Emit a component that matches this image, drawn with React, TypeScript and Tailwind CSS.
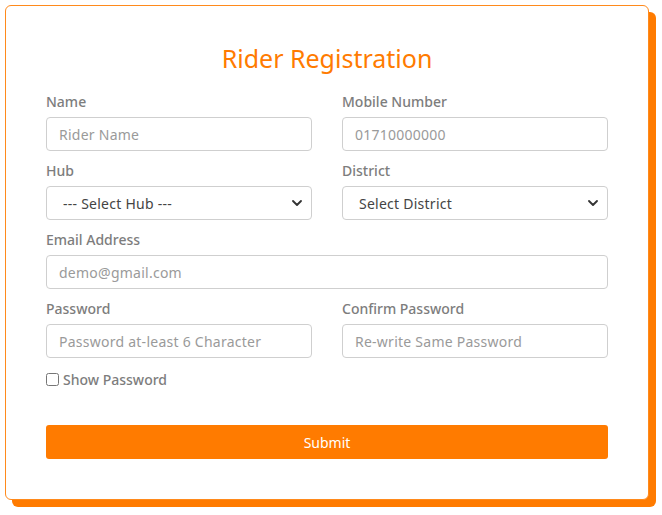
import { ChevronDown } from "lucide-react";

const font = { fontFamily: "'Noto Sans', 'Open Sans', sans-serif" };

function Field({ label, placeholder, full }: { label: string; placeholder: string; full?: boolean }) {
  return (
    <div className={full ? "col-span-2 flex flex-col" : "flex flex-col"}>
      <label className="h-5 text-[14px] leading-5 font-medium text-[#7d7d7d] mb-[5px]">{label}</label>
      <input
        className="h-[34px] w-full rounded-[4px] border border-[#cfcfcf] px-[12px] text-[14px] tracking-[0.25px] text-[#555] placeholder:text-[#9a9a9a] outline-none"
        placeholder={placeholder}
      />
    </div>
  );
}

function SelectField({ label, value }: { label: string; value: string }) {
  return (
    <div className="flex flex-col">
      <label className="h-5 text-[14px] leading-5 font-medium text-[#7d7d7d] mb-[5px]">{label}</label>
      <div className="relative">
        <select className="h-[34px] w-full appearance-none rounded-[4px] border border-[#cfcfcf] bg-white px-[16px] text-[14px] tracking-[0.25px] text-[#444] outline-none">
          <option>{value}</option>
        </select>
        <ChevronDown className="pointer-events-none absolute right-[7px] top-[9px] h-[16px] w-[16px] text-[#333]" strokeWidth={2.8} />
      </div>
    </div>
  );
}

export default function App() {
  return (
    <div className="bg-white min-h-[515px] p-[5px]" style={font}>
      <div className="w-[644px] h-[495px] rounded-[6px] border border-[#ff8a1c] bg-white shadow-[7px_7px_0_#ff7b00] px-[40px] pt-[36px]">
        <h1 className="text-center text-[25px] leading-8 text-[#ff7b00] mb-[18px]">Rider Registration</h1>
        <div className="grid grid-cols-2 gap-x-[30px] gap-y-[10px]">
          <Field label="Name" placeholder="Rider Name" />
          <Field label="Mobile Number" placeholder="01710000000" />
          <SelectField label="Hub" value="--- Select Hub ---" />
          <SelectField label="District" value="Select District" />
          <Field label="Email Address" placeholder="demo@gmail.com" full />
          <Field label="Password" placeholder="Password at-least 6 Character" />
          <Field label="Confirm Password" placeholder="Re-write Same Password" />
          <label className="col-span-2 flex h-5 items-center gap-[4px] text-[14px] font-medium text-[#7d7d7d] mt-[1px]">
            <input type="checkbox" className="h-[13px] w-[13px]" />
            Show Password
          </label>
        </div>
        <button className="mt-[36px] h-[34px] w-full rounded-[3px] bg-[#ff7b00] text-[14px] text-white">Submit</button>
      </div>
    </div>
  );
}
